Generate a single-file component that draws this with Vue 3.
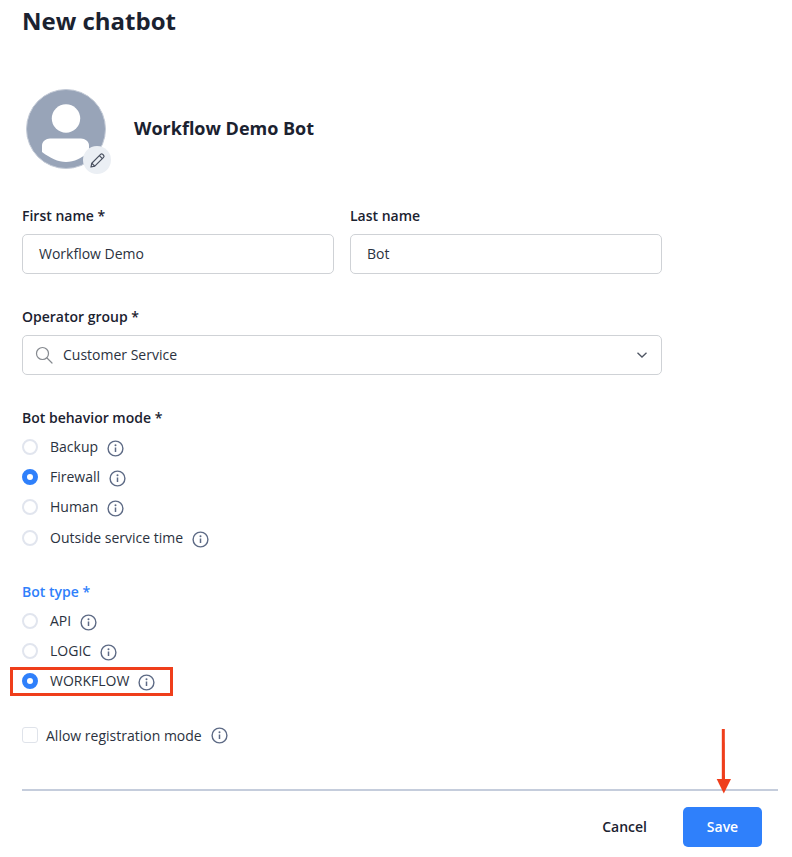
<script setup>
const behaviors = [
  { label: 'Backup', checked: false },
  { label: 'Firewall', checked: true },
  { label: 'Human', checked: false },
  { label: 'Outside service time', checked: false },
]
const types = [
  { label: 'API', checked: false },
  { label: 'LOGIC', checked: false },
  { label: 'WORKFLOW', checked: true },
]
</script>

<template>
  <div class="page">
    <h1 class="title">New chatbot</h1>

    <div class="profile">
      <div class="avatar">
        <svg width="80" height="80" viewBox="0 0 80 80">
          <circle cx="40" cy="40" r="39.5" fill="#98a4b8" stroke="#c3cad6" stroke-width="1" />
          <circle cx="40" cy="29.5" r="14.2" fill="#fff" />
          <path d="M24 49.5h31c4 0 8 3 8 7v6.5C56 69 48 73 40 73S24 69 16 63v-6.5c0-4 4-7 8-7z" fill="#fff" />
        </svg>
        <div class="edit">
          <svg width="19" height="19" viewBox="0 0 16 16" fill="none" stroke="#4a5160" stroke-width="1" stroke-linejoin="round">
            <path d="M2.5 13.5l.7-3.2 7.4-7.4a1.3 1.3 0 0 1 1.8 0l.7.7a1.3 1.3 0 0 1 0 1.8l-7.4 7.4z" />
            <path d="M9.6 3.9l2.5 2.5M3.2 10.3l2.5 2.5" />
          </svg>
        </div>
      </div>
      <div class="bot-name">Workflow Demo Bot</div>
    </div>

    <div class="form-narrow">
      <div class="name-row">
        <div class="field">
          <label class="label">First name *</label>
          <div class="input"><span class="value">Workflow Demo</span></div>
        </div>
        <div class="field">
          <label class="label">Last name</label>
          <div class="input"><span class="value">Bot</span></div>
        </div>
      </div>

      <div class="field group">
        <label class="label">Operator group *</label>
        <div class="input select">
          <svg class="search" width="18" height="18" viewBox="0 0 18 18" fill="none" stroke="#85898f" stroke-width="1.2" stroke-linecap="round">
            <circle cx="7.5" cy="7.5" r="6" />
            <path d="M12 12l5 5" />
          </svg>
          <span class="value">Customer Service</span>
          <svg class="chevron" width="10" height="6" viewBox="0 0 10 6" fill="none" stroke="#4f5663" stroke-width="1.3">
            <path d="M.5.7L5 5 9.5.7" />
          </svg>
        </div>
      </div>
    </div>

    <div class="behavior">
      <div class="label tight">Bot behavior mode *</div>
      <div v-for="b in behaviors" :key="b.label" class="radio-row">
        <span class="radio" :class="{ on: b.checked }"></span>
        <span class="radio-label">{{ b.label }}</span>
        <svg class="info" width="17" height="17" viewBox="0 0 17 17" fill="none">
          <circle cx="8.5" cy="8.5" r="7.4" stroke="#5d6a85" stroke-width="1.4" />
          <path d="M8.5 7.5v4.5" stroke="#5d6a85" stroke-width="1.5" />
          <circle cx="8.5" cy="5.2" r="1" fill="#5d6a85" />
        </svg>
      </div>
    </div>

    <div class="type">
      <div class="label tight blue">Bot type *</div>
      <div v-for="t in types" :key="t.label" class="radio-row">
        <span class="radio" :class="{ on: t.checked }"></span>
        <span class="radio-label">{{ t.label }}</span>
        <svg class="info" width="17" height="17" viewBox="0 0 17 17" fill="none">
          <circle cx="8.5" cy="8.5" r="7.4" stroke="#5d6a85" stroke-width="1.4" />
          <path d="M8.5 7.5v4.5" stroke="#5d6a85" stroke-width="1.5" />
          <circle cx="8.5" cy="5.2" r="1" fill="#5d6a85" />
        </svg>
        <span v-if="t.label === 'WORKFLOW'" class="highlight"></span>
      </div>
    </div>

    <div class="check-row">
      <span class="checkbox"></span>
      <span class="radio-label">Allow registration mode</span>
      <svg class="info" width="17" height="17" viewBox="0 0 17 17" fill="none">
        <circle cx="8.5" cy="8.5" r="7.4" stroke="#5d6a85" stroke-width="1.4" />
        <path d="M8.5 7.5v4.5" stroke="#5d6a85" stroke-width="1.5" />
        <circle cx="8.5" cy="5.2" r="1" fill="#5d6a85" />
      </svg>
    </div>

    <div class="footer">
      <button class="cancel">Cancel</button>
      <button class="save">Save</button>
      <svg class="arrow" width="16" height="67" viewBox="0 0 16 67">
        <path d="M5.8 0h3l.2 52H5.8z" fill="#ef3e1b" />
        <path d="M.7 50h14.3l-7.2 14.5z" fill="#ef3e1b" />
      </svg>
    </div>
  </div>
</template>

<style scoped>
.page {
  position: relative;
  width: 792px;
  height: 857px;
  box-sizing: border-box;
  padding: 0 14px 0 22px;
  background: #fff;
  color: #1b2230;
  font-family: "Open Sans", "Noto Sans", sans-serif;
  font-size: 14px;
  overflow: hidden;
}
.title {
  margin: 4px 0 0;
  font-size: 24px;
  line-height: 33px;
  font-weight: 700;
}
.profile {
  display: flex;
  align-items: center;
  gap: 28px;
  margin: 52px 0 0 4px;
}
.avatar {
  position: relative;
  width: 80px;
  height: 80px;
}
.avatar svg {
  display: block;
}
.edit {
  position: absolute;
  left: 57px;
  top: 57px;
  width: 28px;
  height: 28px;
  border-radius: 50%;
  background: #ebeff4;
  display: flex;
  align-items: center;
  justify-content: center;
}
.bot-name {
  font-size: 18px;
  font-weight: 700;
  line-height: 24px;
  margin-bottom: 2px;
}
.form-narrow {
  width: 640px;
  margin-top: 37px;
}
.name-row {
  display: flex;
  gap: 16px;
}
.field {
  flex: 1;
}
.group {
  margin-top: 33px;
}
.label {
  display: block;
  font-size: 14px;
  line-height: 20px;
  font-weight: 600;
}
.input {
  box-sizing: border-box;
  height: 40px;
  margin-top: 8px;
  padding: 0 16px;
  display: flex;
  align-items: center;
  border: 1px solid #cfd2d6;
  border-radius: 5px;
  font-size: 14px;
  color: #2b3240;
}
.value {
  margin-bottom: 2px;
}
.select {
  padding: 0 14px 0 12px;
}
.search {
  margin-right: 10px;
}
.chevron {
  margin-left: auto;
}
.behavior {
  margin-top: 33px;
}
.tight {
  margin-bottom: 4px;
}
.blue {
  color: #2f80fb;
}
.radio-row {
  position: relative;
  display: flex;
  align-items: center;
  height: 30px;
}
.behavior .radio-row:last-child {
  margin-top: 1px;
}
.radio {
  box-sizing: border-box;
  width: 16px;
  height: 16px;
  border: 2px solid #e1e5ee;
  border-radius: 50%;
  background: #fff;
  margin-right: 12px;
}
.radio.on {
  border: 5px solid #2f80fb;
}
.radio-label {
  font-size: 14px;
  line-height: 20px;
  color: #2b3240;
}
.info {
  margin-left: 9px;
  margin-top: 2px;
}
.type {
  margin-top: 29px;
}
.highlight {
  position: absolute;
  left: -12px;
  top: 1px;
  width: 163px;
  height: 29px;
  box-sizing: border-box;
  border: 3px solid #ef3e1b;
  pointer-events: none;
}
.check-row {
  display: flex;
  align-items: center;
  height: 20px;
  margin-top: 30px;
}
.check-row .info {
  margin-top: -1px;
}
.checkbox {
  box-sizing: border-box;
  width: 16px;
  height: 16px;
  border: 1px solid #dfe3ea;
  border-radius: 3px;
  margin: -2px 8px 0 0;
}
.footer {
  position: relative;
  display: flex;
  justify-content: flex-end;
  align-items: center;
  gap: 36px;
  margin-top: 43px;
  border-top: 2px solid #c5cddc;
  padding: 16px 16px 0 0;
}
button {
  box-sizing: border-box;
  height: 40px;
  font-family: inherit;
  font-size: 14px;
  font-weight: 600;
  border: 0;
  background: none;
  padding: 0 0 1px;
}
.cancel {
  color: #1b2230;
}
.save {
  width: 79px;
  border-radius: 5px;
  background: #2f80fb;
  color: #fff;
}
.arrow {
  position: absolute;
  left: 694px;
  top: -62px;
}
</style>
